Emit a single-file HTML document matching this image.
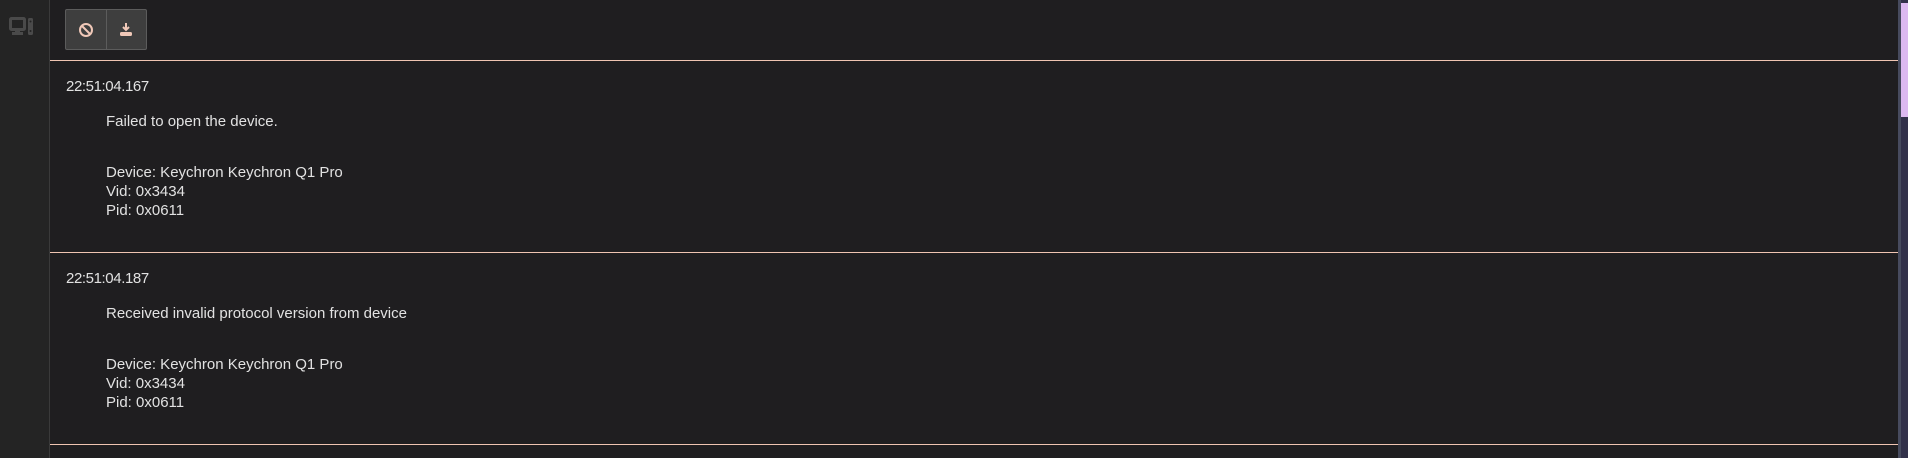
<!DOCTYPE html>
<html><head><style>
html,body{margin:0;padding:0;width:1908px;height:458px;overflow:hidden;background:#1f1e20;font-family:"Liberation Sans",sans-serif;}
.side{position:absolute;left:0;top:0;width:49px;height:458px;background:#242424;border-right:1px solid #3a3a3a;}
.main{position:absolute;left:50px;top:0;width:1848px;height:458px;background:#1f1e20;}
.btns{position:absolute;left:15px;top:9px;width:80px;height:39px;border:1px solid #5c5c5c;border-radius:2px;background:#3e3e3e;display:flex;}
.btns div{flex:1;display:flex;align-items:center;justify-content:center;}
.btns div:first-child{border-right:1px solid #5c5c5c;}
.hr{position:absolute;left:0;width:1848px;height:1px;background:#f0c5b2;}
.t{position:absolute;color:#e2e2e2;font-size:15px;line-height:19px;white-space:nowrap;}
.ts{letter-spacing:-0.4px;}
.sb{position:absolute;left:1898px;top:0;width:3px;height:458px;background:#474b5e;}
.tr{position:absolute;left:1901px;top:0;width:7px;height:458px;background:#32314a;}
.th{position:absolute;left:1901px;top:3px;width:7px;height:114px;background:#dcb9f0;}
</style></head><body>
<div class="side">
<svg style="position:absolute;left:9px;top:17px" width="25" height="19" viewBox="0 0 25 19"><rect x="1.5" y="1.5" width="14" height="11" rx="1" fill="none" stroke="#4a4a4a" stroke-width="3"/><rect x="6" y="12" width="5" height="4" fill="#4a4a4a"/><rect x="3" y="15" width="11" height="3" fill="#4a4a4a"/><rect x="19" y="1" width="5" height="17" rx="1.5" fill="#4a4a4a"/><circle cx="21.5" cy="4.5" r="1" fill="#242424"/><circle cx="21.5" cy="14" r="1" fill="#242424"/></svg>
</div>
<div class="main">
<div class="btns">
<div><svg width="16" height="16" viewBox="0 0 16 16"><circle cx="8" cy="8" r="6" fill="none" stroke="#f0c8b8" stroke-width="2"/><line x1="4" y1="4" x2="12" y2="12" stroke="#f0c8b8" stroke-width="2"/></svg></div>
<div><svg width="16" height="16" viewBox="0 0 16 16"><path d="M8 1v7M5 5l3 3 3-3" stroke="#f0c8b8" stroke-width="2" fill="none"/><rect x="2" y="10" width="12" height="4" rx="1.5" fill="#f0c8b8"/></svg></div>
</div>
<div class="hr" style="top:60px"></div>
<div class="t ts" style="left:16px;top:77px">22:51:04.167</div>
<div class="t" style="left:56px;top:112px">Failed to open the device.</div>
<div class="t" style="left:56px;top:163px">Device: Keychron Keychron Q1 Pro<br>Vid: 0x3434<br>Pid: 0x0611</div>
<div class="hr" style="top:252px"></div>
<div class="t ts" style="left:16px;top:269px">22:51:04.187</div>
<div class="t" style="left:56px;top:304px">Received invalid protocol version from device</div>
<div class="t" style="left:56px;top:355px">Device: Keychron Keychron Q1 Pro<br>Vid: 0x3434<br>Pid: 0x0611</div>
<div class="hr" style="top:444px"></div>
</div>
<div class="sb"></div><div class="tr"></div><div class="th"></div>
</body></html>
